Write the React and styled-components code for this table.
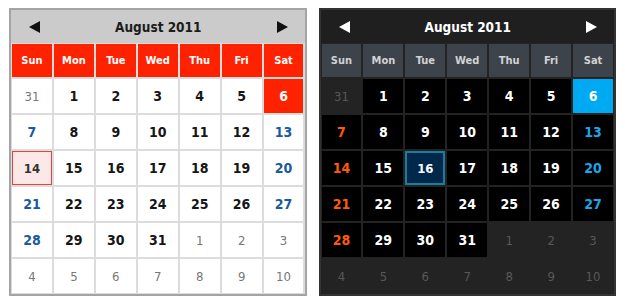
import React from 'react';
import styled, { createGlobalStyle, ThemeProvider } from 'styled-components';

const GlobalStyle = createGlobalStyle`
  html, body {
    margin: 0;
    background: #ffffff;
  }
`;

const light = {
  border: '#a4a4a4',
  gap: '#dcdcdc',
  titleBg: '#cbcbcb',
  titleText: '#1c1c1c',
  arrow: '#111111',
  headBg: '#ff2200',
  headText: '#ffffff',
  cellBg: '#ffffff',
  cellText: '#161616',
  sun: '#1b5a9c',
  sat: '#1b5a9c',
  otherBg: '#ffffff',
  otherText: '#777777',
  selBg: '#ff2200',
  selText: '#ffffff',
  todayBg: '#fde8e8',
  todayBorder: '#e2453c',
  todayText: '#333333',
  todayBorderWidth: '1px',
};

const dark = {
  border: '#333333',
  gap: '#232323',
  titleBg: '#1f1f1f',
  titleText: '#ffffff',
  arrow: '#ffffff',
  headBg: '#3d434b',
  headText: '#d2d2d2',
  cellBg: '#000000',
  cellText: '#ffffff',
  sun: '#ff5a0a',
  sat: '#1ca6ea',
  otherBg: '#232323',
  otherText: '#585858',
  selBg: '#00aaf2',
  selText: '#ffffff',
  todayBg: '#00284a',
  todayBorder: '#1d7c9c',
  todayText: '#ffffff',
  todayBorderWidth: '2px',
};

const Page = styled.div`
  display: flex;
  gap: 12px;
  padding: 8px 9px;
  font-family: 'DejaVu Sans Condensed', 'DejaVu Sans', sans-serif;
`;

const Calendar = styled.div`
  width: 298px;
  box-sizing: border-box;
  border: 2px solid ${(p) => p.theme.border};
  background: ${(p) => p.theme.gap};
  display: flex;
  flex-direction: column;
`;

const TitleBar = styled.div`
  height: 33px;
  background: ${(p) => p.theme.titleBg};
  display: flex;
  align-items: center;
  justify-content: space-between;
  padding: 0 17px 0 18px;
`;

const Title = styled.div`
  color: ${(p) => p.theme.titleText};
  font-size: 13.5px;
  font-weight: bold;
`;

const Arrow = styled.svg`
  width: 11px;
  height: 12px;
  fill: ${(p) => p.theme.arrow};
`;

const Grid = styled.div`
  display: grid;
  grid-template-columns: repeat(7, 1fr);
  grid-template-rows: 33px repeat(6, 34px);
  gap: 2px;
  padding: 1px;
`;

const HeadCell = styled.div`
  background: ${(p) => p.theme.headBg};
  color: ${(p) => p.theme.headText};
  font-size: 11px;
  font-weight: bold;
  display: flex;
  align-items: center;
  justify-content: center;
`;

const pickBg = (p) => {
  if (p.$kind === 'sel') return p.theme.selBg;
  if (p.$kind === 'today') return p.theme.todayBg;
  if (p.$kind === 'other') return p.theme.otherBg;
  return p.theme.cellBg;
};

const pickColor = (p) => {
  if (p.$kind === 'sel') return p.theme.selText;
  if (p.$kind === 'today') return p.theme.todayText;
  if (p.$kind === 'other') return p.theme.otherText;
  if (p.$col === 0) return p.theme.sun;
  if (p.$col === 6) return p.theme.sat;
  return p.theme.cellText;
};

const DayCell = styled.div`
  box-sizing: border-box;
  background: ${pickBg};
  color: ${pickColor};
  border: ${(p) =>
    p.$kind === 'today' ? `${p.theme.todayBorderWidth} solid ${p.theme.todayBorder}` : 'none'};
  font-size: ${(p) => (p.$kind === 'other' ? '13px' : p.$kind === 'today' ? '13px' : '14px')};
  font-weight: ${(p) => (p.$kind === 'other' ? 'normal' : 'bold')};
  display: flex;
  align-items: center;
  justify-content: center;
`;

const dayNames = ['Sun', 'Mon', 'Tue', 'Wed', 'Thu', 'Fri', 'Sat'];

const buildDays = () => {
  const days = [{ n: 31, other: true }];
  for (let i = 1; i <= 31; i++) days.push({ n: i, other: false });
  for (let i = 1; i <= 10; i++) days.push({ n: i, other: true });
  return days;
};

const MonthView = ({ today }) => {
  const days = buildDays();
  return (
    <Calendar>
      <TitleBar>
        <Arrow viewBox="0 0 11 12">
          <polygon points="0,6 11,0 11,12" />
        </Arrow>
        <Title>August 2011</Title>
        <Arrow viewBox="0 0 11 12">
          <polygon points="11,6 0,0 0,12" />
        </Arrow>
      </TitleBar>
      <Grid>
        {dayNames.map((d) => (
          <HeadCell key={d}>{d}</HeadCell>
        ))}
        {days.map((d, i) => {
          let kind = 'day';
          if (d.other) kind = 'other';
          else if (d.n === 6) kind = 'sel';
          else if (d.n === today) kind = 'today';
          return (
            <DayCell key={i} $kind={kind} $col={i % 7}>
              {d.n}
            </DayCell>
          );
        })}
      </Grid>
    </Calendar>
  );
};

export default function App() {
  return (
    <>
      <GlobalStyle />
      <Page>
        <ThemeProvider theme={light}>
          <MonthView today={14} />
        </ThemeProvider>
        <ThemeProvider theme={dark}>
          <MonthView today={16} />
        </ThemeProvider>
      </Page>
    </>
  );
}
